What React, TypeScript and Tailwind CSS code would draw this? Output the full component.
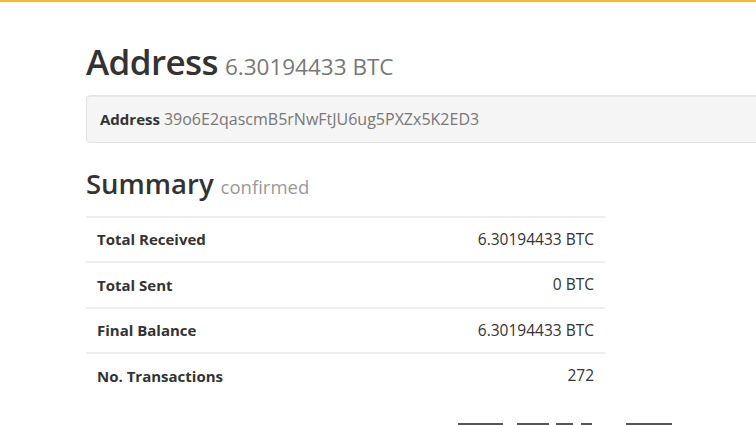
import React from "react";

const rows = [
  ["Total Received", "6.30194433 BTC"],
  ["Total Sent", "0 BTC"],
  ["Final Balance", "6.30194433 BTC"],
  ["No. Transactions", "272"],
];

export default function App() {
  return (
    <div className="relative w-[756px] h-[425px] overflow-hidden bg-white" style={{ fontFamily: '"Open Sans", "DejaVu Sans", sans-serif' }}>
      <div className="h-[2px] bg-[#f7b928]" />
      <div className="pl-[86px] pt-[42px]">
        <h1 className="flex items-baseline gap-[7px] text-[#333] leading-none">
          <span className="text-[35px] font-semibold tracking-[-0.6px]">Address</span>
          <span className="text-[22.5px] text-[#777]">6.30194433 BTC</span>
        </h1>
        <div className="mt-[16px] w-[700px] h-[48px] bg-[#f5f5f5] border border-[#e3e3e3] rounded-l-[4px] shadow-[inset_0_1px_1px_rgba(0,0,0,0.05)] flex items-center pl-[13px] text-[15px]">
          <span className="font-bold text-[#333]">Address</span>
          <span className="ml-[4px] text-[16px] text-[#777]">39o6E2qascmB5rNwFtJU6ug5PXZx5K2ED3</span>
        </div>
        <h2 className="mt-[27px] flex items-baseline gap-[7px] leading-none text-[#333]">
          <span className="text-[27.5px] font-semibold">Summary</span>
          <span className="text-[18.5px] text-[#999]">confirmed</span>
        </h2>
        <div className="mt-[18px] w-[519px]">
          {rows.map(([k, v]) => (
            <div key={k} className="border-t-2 border-[#eee] h-[45.5px] flex items-center justify-between px-[11px] text-[15px]">
              <span className="font-bold text-[#333]">{k}</span>
              <span className="text-[15.5px] text-[#333]">{v}</span>
            </div>
          ))}
        </div>
      </div>
      <div className="absolute top-[423px] left-[458px] flex">
        <div className="h-[2px] w-[45px] bg-[#555]" />
        <div className="h-[2px] w-[32px] bg-[#555] ml-[14px]" />
        <div className="h-[2px] w-[17px] bg-[#555] ml-[7px]" />
        <div className="h-[2px] w-[11px] bg-[#555] ml-[8px]" />
        <div className="h-[2px] w-[46px] bg-[#555] ml-[34px]" />
      </div>
    </div>
  );
}
